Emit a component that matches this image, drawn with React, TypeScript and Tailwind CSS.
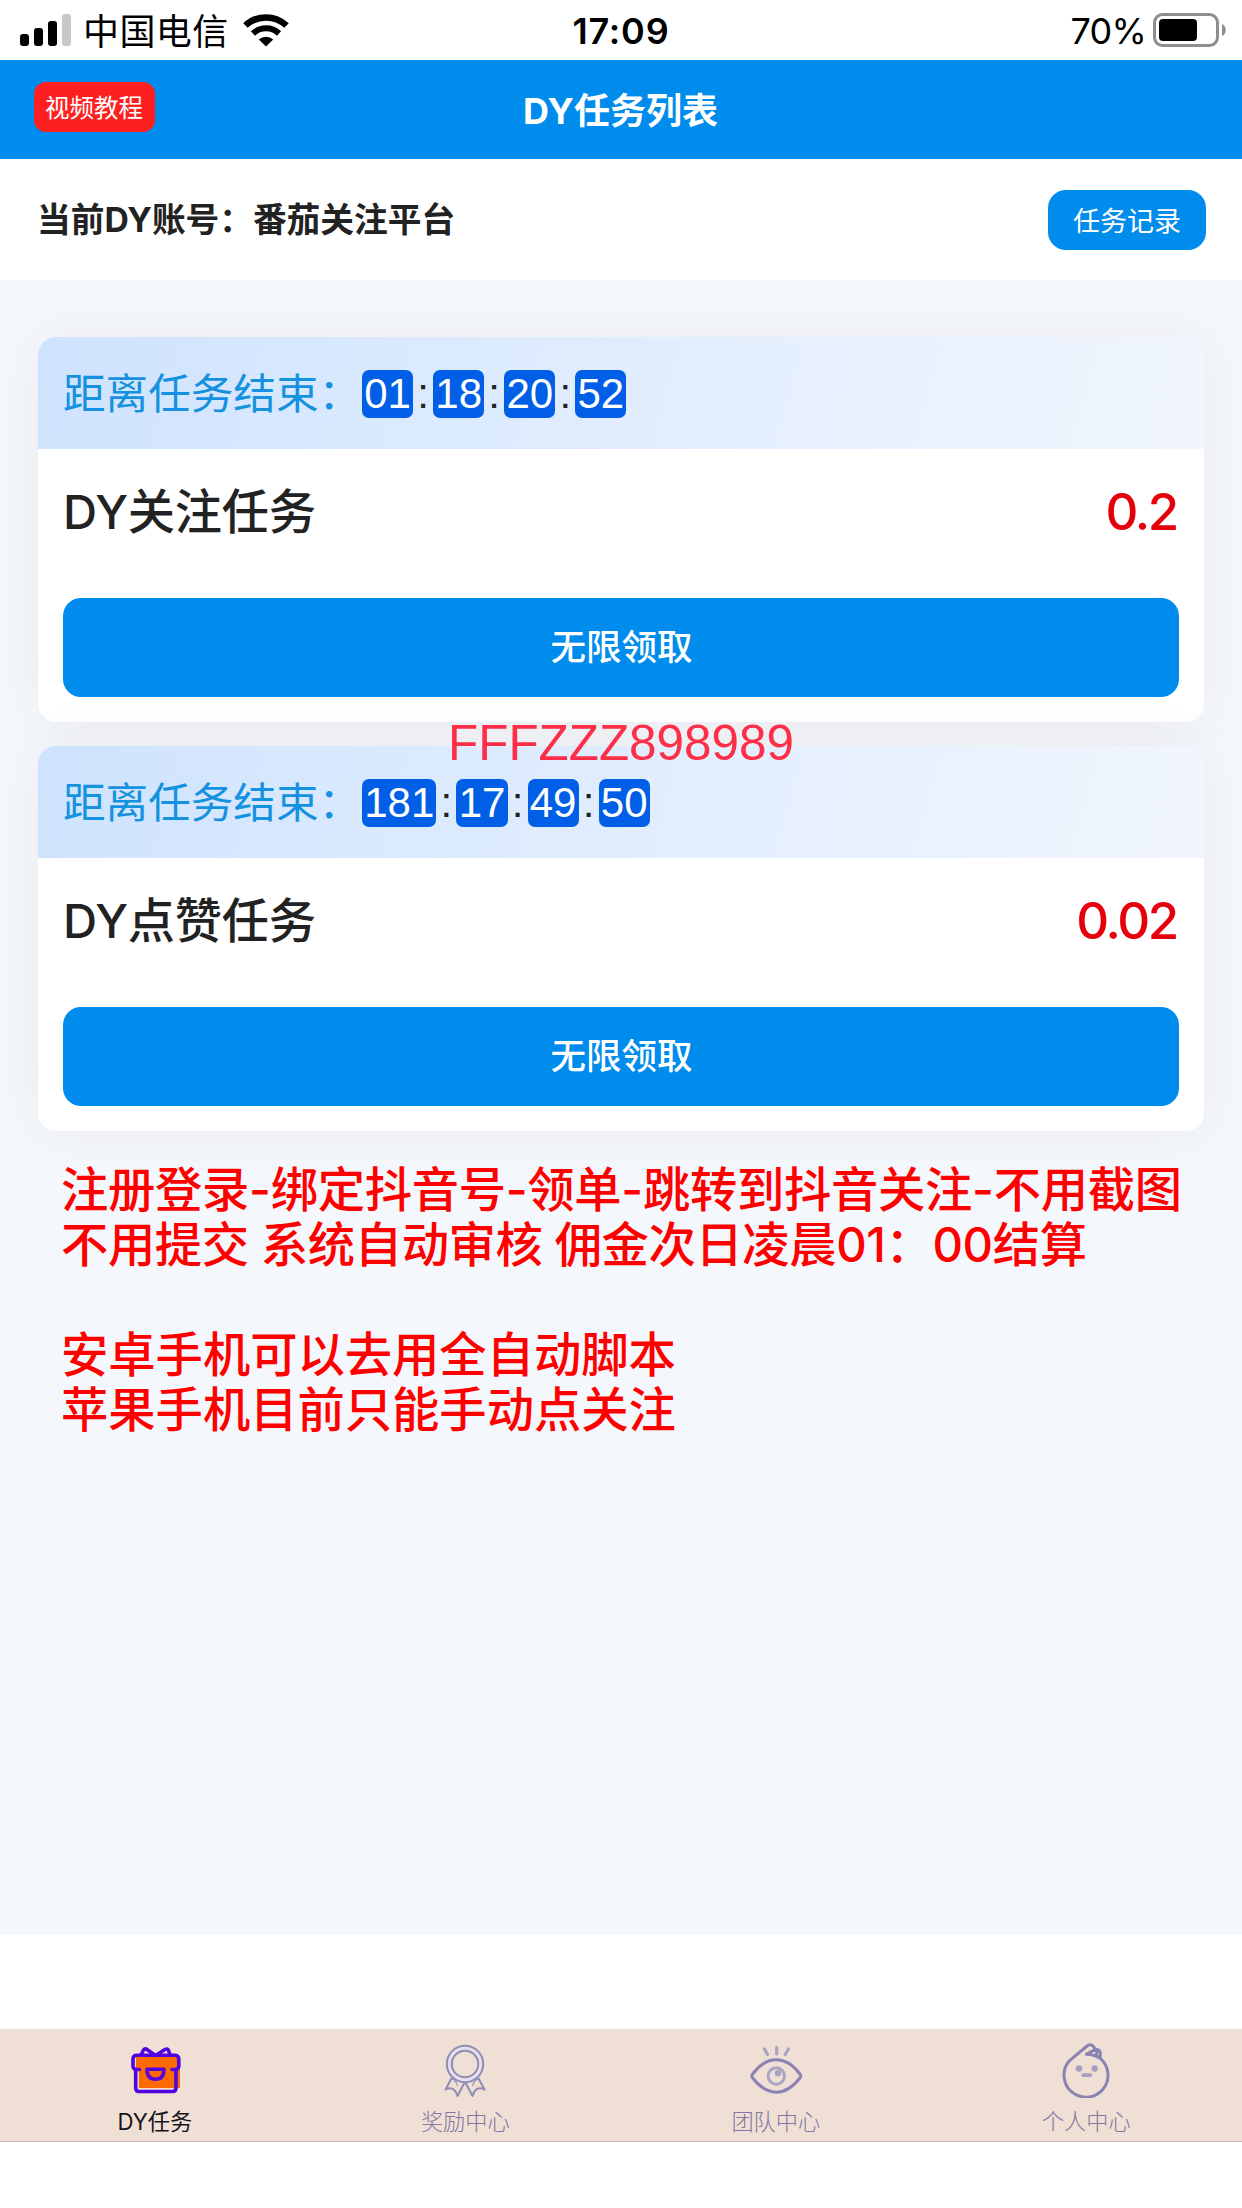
import React from 'react';

interface Task {
  title: string;
  reward: string;
  countdown: string[];
}

const tasks: Task[] = [
  { title: 'DY关注任务', reward: '0.2', countdown: ['01', '18', '20', '52'] },
  { title: 'DY点赞任务', reward: '0.02', countdown: ['181', '17', '49', '50'] },
];

const StatusBar: React.FC = () => (
  <div className="h-[60px] bg-white px-5 flex items-center justify-between text-black relative">
    <div className="flex items-center">
      <svg className="w-[51px] h-8" viewBox="0 0 51 32">
        <rect x="0" y="20" width="9" height="12" rx="3" />
        <rect x="14" y="14" width="9" height="18" rx="3" />
        <rect x="28" y="7" width="9" height="25" rx="3" />
        <rect x="42" y="0" width="9" height="32" rx="3" fill="#c8c8c8" />
      </svg>
      <span className="ml-3 pt-[3px] text-[36px] leading-[60px] tracking-[0.4px]">中国电信</span>
      <svg className="ml-[14px] w-[46px] h-[33px]" viewBox="0 0 46 33" fill="none" stroke="#000">
        <path d="M2.5 11.5A30 30 0 0 1 43.5 11.5" strokeWidth="6.5" />
        <path d="M10 19.5A19 19 0 0 1 36 19.5" strokeWidth="6" />
        <path d="M23 32.5L15.8 25.6A10.5 10.5 0 0 1 30.2 25.6Z" fill="#000" stroke="none" />
      </svg>
    </div>
    <span className="absolute left-1/2 -translate-x-1/2 top-[1px] text-[36px] leading-[60px] font-semibold tracking-[0.8px]">17:09</span>
    <div className="flex items-center -mr-1">
      <span className="pt-[2px] text-[36px] leading-[60px] tracking-[-0.8px]">70%</span>
      <svg className="ml-[7px] w-[73px] h-[34px]" viewBox="0 0 73 34">
        <rect x="1.5" y="1.5" width="63" height="31" rx="8" fill="none" stroke="#8e8e8e" strokeWidth="3" />
        <rect x="6" y="6" width="38" height="22" rx="4" />
        <path d="M69 11C74 13 74 21 69 23Z" fill="#8e8e8e" />
      </svg>
    </div>
  </div>
);

const TaskCard: React.FC<{ task: Task }> = ({ task }) => (
  <div className="rounded-[18px] bg-white shadow-[0_0_60px_rgba(50,20,0,0.05)]">
    <div className="h-28 rounded-t-[18px] px-[25px] pt-[2px] flex items-center bg-linear-[105deg,#cfe3fe,#dfecfe_45%,#f1f6fe]">
      <span className="w-[299px] text-[42.6px] leading-[60px] whitespace-nowrap text-[#1492e0]">距离任务结束：</span>
      <div className="flex items-center font-['Liberation_Sans',sans-serif] text-[42px] leading-[48px]">
        {task.countdown.map((part, i) => (
          <React.Fragment key={i}>
            {i > 0 && <span className="w-[20px] text-center text-[#222]">:</span>}
            <span className="px-[2.2px] rounded-[7px] bg-[#005fe6] text-white">{part}</span>
          </React.Fragment>
        ))}
      </div>
    </div>
    <div className="px-[25px] pb-[25px]">
      <div className="h-[149px] pb-[23px] flex items-center justify-between font-medium">
        <span className="text-[47.2px] leading-[60px] text-[#222] tracking-[-0.2px]">{task.title}</span>
        <span className="text-[51px] leading-[60px] text-[#e6000c] tracking-[-2.3px] pr-[2px]">{task.reward}</span>
      </div>
      <button className="block w-full h-[99px] pt-px pl-px rounded-[18px] bg-[#008cec] text-white text-[35.5px] font-medium">
        无限领取
      </button>
    </div>
  </div>
);

const GiftIcon: React.FC = () => (
  <svg className="size-14" viewBox="0 0 56 56" fill="none" stroke="#5203e0" strokeWidth="3.6" strokeLinecap="round" strokeLinejoin="round">
    <path d="M9 15H50V26H53V46H12V26H9Z" fill="#ff6a00" stroke="none" />
    <path d="M14 13L16.5 8Q18 6 20 7.5L28.5 13.5L38 7.5Q41 6 41.8 9L43 13" />
    <path d="M12.5 27.5H9Q6 27 6 24V17Q6 13.2 10 13.2H47.5Q51.8 13.2 51.8 17V24Q51.8 27 48.5 27.5H45" />
    <path d="M8.7 28V46Q8.7 49.5 12 49.5H45.5Q49 49.5 49 46V28" />
    <path d="M20 27.3H37Q37 37.3 28.5 37.3T20 27.3Z" />
  </svg>
);

const MedalIcon: React.FC = () => (
  <svg className="size-14" viewBox="0 0 56 56" fill="none" stroke="#8f8db3" strokeWidth="2" strokeLinejoin="round">
    <circle cx="28" cy="22" r="15.8" stroke="#e8ddec" strokeWidth="4.5" />
    <circle cx="28" cy="22" r="18.2" />
    <circle cx="28" cy="22" r="13.2" />
    <path d="M14.7 36L8.5 47.5Q17 43 20.5 54L27.3 41" />
    <path d="M41.3 36L47.5 47.5Q39 43 35.5 54L28.7 41" />
    <path d="M14.5 36.5Q19.5 39 20.5 44M41.5 36.5Q36.5 39 35.5 44" strokeWidth="1.2" />
  </svg>
);

const EyeIcon: React.FC = () => (
  <svg className="size-14" viewBox="0 0 56 56" fill="none" stroke="#8b83b3" strokeWidth="3" strokeLinecap="round" strokeLinejoin="round">
    <path d="M4.3 32.5Q15 17.8 28.3 17.8T52.3 32.5Q53.2 34 52.3 35.5Q41 50.2 28.3 50.2T4.3 35.5Q3.2 34 4.3 32.5Z" />
    <g stroke="#aaa4c2">
      <circle cx="28.3" cy="34" r="8.2" />
      <circle cx="30" cy="31.3" r="1.8" fill="#aaa4c2" />
      <path d="M16.5 7L19.5 12.5M28.7 5.5V12M40.5 7L37.3 12.5" strokeWidth="3.2" />
    </g>
  </svg>
);

const FaceIcon: React.FC = () => (
  <svg className="size-14" viewBox="0 0 56 56" fill="none" stroke="#8883b3" strokeWidth="3" strokeLinecap="round" strokeLinejoin="round">
    <path d="M28.5 12.2Q36 12.5 42 16.2A22 22 0 1 1 11.8 18.3L28.5 4.5Q32.5 1 35.8 4.8Q37.2 6.8 36.2 8.2L28.5 12.2" />
    <path d="M36.2 8.2Q40.5 6.5 42 9.5Q43 12 42 15.5Q39 14 36.5 13.3Q40 12 38.5 9.5" />
    <g fill="#a5a0bf" stroke="none">
      <circle cx="21" cy="26.5" r="3.2" />
      <circle cx="36.7" cy="26.5" r="3.2" />
      <rect x="23.3" y="31.3" width="11" height="3.6" rx="1.8" />
    </g>
  </svg>
);

const tabs = [
  { label: 'DY任务', icon: <GiftIcon />, active: true },
  { label: '奖励中心', icon: <MedalIcon />, active: false },
  { label: '团队中心', icon: <EyeIcon />, active: false },
  { label: '个人中心', icon: <FaceIcon />, active: false },
];

export default function App() {
  return (
    <div className="w-[1242px] h-[2208px] flex flex-col bg-white overflow-hidden font-['Inter','Noto_Sans_CJK_SC',sans-serif]">
      <StatusBar />

      {/* Header */}
      <header className="h-[99px] bg-[#008cec] relative flex items-center justify-center text-white">
        <button className="absolute left-[34px] top-[22px] w-[121px] h-[50px] pr-px rounded-xl bg-[#fe2020] text-[24.5px] leading-[53px]">
          视频教程
        </button>
        <h1 className="pt-[2px] pr-px text-[36px] leading-[60px] font-bold">DY任务列表</h1>
      </header>

      {/* Account */}
      <div className="h-[121px] pl-[37px] pr-9 flex items-center justify-between">
        <span className="text-[33.7px] leading-[60px] font-bold text-[#222]">当前DY账号：番茄关注平台</span>
        <button className="w-[158px] h-[60px] rounded-[18px] bg-[#008cec] text-white text-[27px] leading-[63px]">
          任务记录
        </button>
      </div>

      <main className="h-[1655px] bg-[#f4f7fb] px-[38px] pt-[57px] overflow-hidden">
        <div className="relative flex flex-col gap-6">
          {tasks.map((task) => (
            <TaskCard key={task.title} task={task} />
          ))}
          <span className="absolute left-1/2 -translate-x-1/2 top-[376px] font-['Liberation_Sans',sans-serif] text-[49.4px] leading-[60px] text-[#fd2e48]">
            FFFZZZ898989
          </span>
        </div>

        {/* Instructions */}
        <div className="mt-[31px] pl-[23px] text-[47.3px] leading-[55px] font-medium text-[#ff0000] whitespace-nowrap">
          <p className="tracking-[-0.28px]">注册登录-绑定抖音号-领单-跳转到抖音关注-不用截图</p>
          <p className="tracking-[-0.38px]">不用提交 系统自动审核 佣金次日凌晨01：00结算</p>
          <p className="mt-[55px]">安卓手机可以去用全自动脚本</p>
          <p>苹果手机目前只能手动点关注</p>
        </div>
      </main>

      {/* Tab bar */}
      <nav className="mt-[94px] h-[113px] bg-[#f0dfd4] border-b border-[#c3b6b8] grid grid-cols-4">
        {tabs.map((tab) => (
          <div key={tab.label} className="pt-[13px] pr-px flex flex-col items-center">
            {tab.icon}
            <span className={`mt-2 text-[22.2px] leading-8 ${tab.active ? 'text-[#151520]' : 'font-light text-[#7f77a6]'}`}>
              {tab.label}
            </span>
          </div>
        ))}
      </nav>
    </div>
  );
}
